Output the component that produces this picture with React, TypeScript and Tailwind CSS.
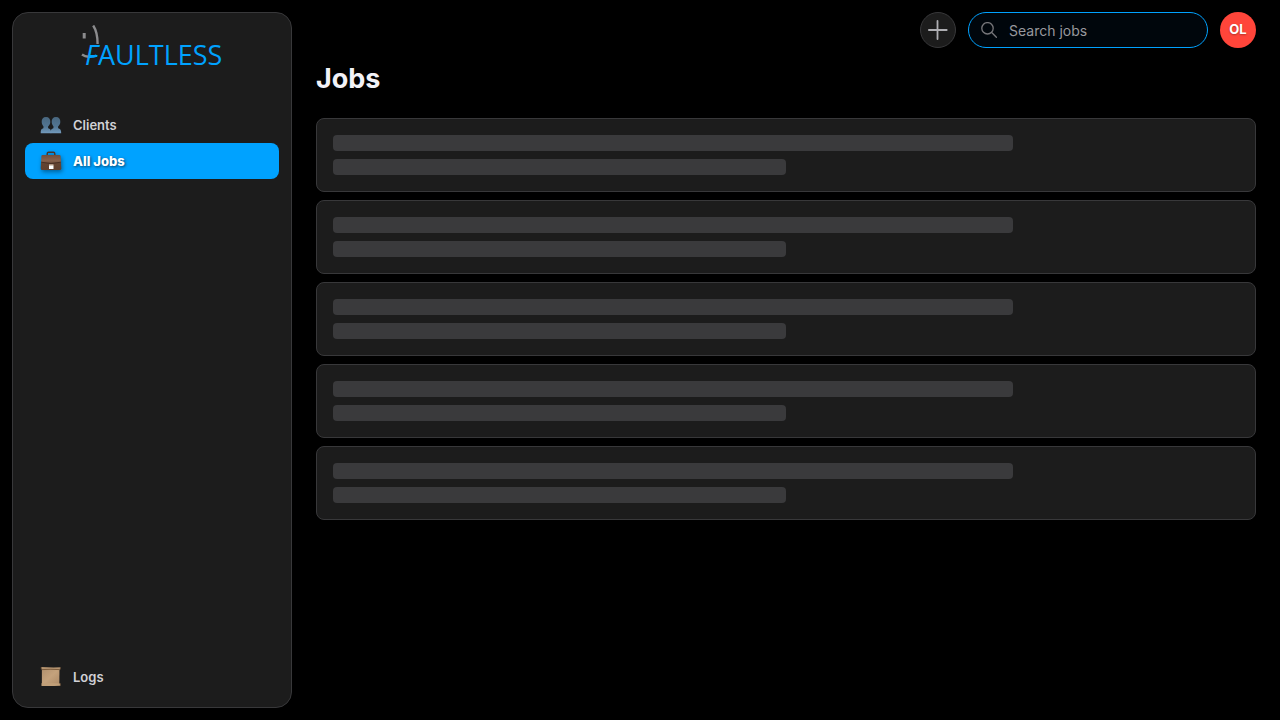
import React from "react";

function Logo() {
  return (
    <a href="#home" aria-label="Faultless" className="relative flex h-[42px] w-[142px] items-end text-[#00a2ff]">
      <svg aria-hidden="true" viewBox="0 0 24 40" className="absolute top-0 left-0 h-10 w-6" fill="none" stroke="#8b8b8d" strokeWidth="2.4">
        <path d="M3.200 8v5.500" strokeWidth="3" />
        <path d="M12.200.5C15.200 5 16.600 12 16.600 19" />
        <path d="M1 29.500c2 1.500 4.500 2.300 7 2.200" />
        <path d="M7 31.700c3.500.3 6 0 8.500-1" stroke="#00a2ff" />
      </svg>
      <span className="pl-1 font-['Open_Sans','Noto_Sans',sans-serif] text-[27px] leading-6 font-normal">
        <span className="italic">F</span>AULTLESS
      </span>
    </a>
  );
}

function ClientsIcon() {
  return (
    <svg aria-hidden="true" viewBox="0 0 22 20" className="h-5 w-[22px]">
      <defs>
        <linearGradient id="people" gradientUnits="userSpaceOnUse" x1="0" y1="2" x2="0" y2="18">
          <stop offset="0" stopColor="#49677f" />
          <stop offset=".6" stopColor="#527693" />
          <stop offset="1" stopColor="#7299bb" />
        </linearGradient>
      </defs>
      <g fill="url(#people)">
        <path d="M6 2C3 2 1.500 4 1.700 7c.1 2 .9 3.300 1.800 4.400.1 1.600-.2 2-1.300 2.400C1 14.400.7 15.800.7 18.300h10.500c0-2.500-.5-3.900-1.900-4.500-1.000-.4-1.400-.9-1.200-2.400C9.400 10.300 10.200 9 10.300 7 10.500 4 9 2 6 2Z" />
        <path d="M16 2c-3 0-4.500 2-4.300 5 .1 2 .9 3.300 1.800 4.400.1 1.600-.2 2-1.300 2.400-1.200.6-1.500 2-1.500 4.500h10.500c0-2.500-.5-3.900-1.900-4.500-1.000-.4-1.400-.9-1.200-2.400C19.400 10.300 20.200 9 20.300 7 20.500 4 19 2 16 2Z" />
      </g>
    </svg>
  );
}

function BriefcaseIcon() {
  return (
    <svg aria-hidden="true" viewBox="0 0 22 20" className="h-5 w-[22px] drop-shadow-[1px_2px_2px_rgba(0,0,0,0.4)]">
      <defs>
        <linearGradient id="leather" x1="0" y1="0" x2="0" y2="1">
          <stop offset="0" stopColor="#6f4d3c" />
          <stop offset=".4" stopColor="#88624d" />
          <stop offset=".55" stopColor="#644432" />
          <stop offset="1" stopColor="#60402f" />
        </linearGradient>
      </defs>
      <path d="M7.200 4.500V2.700q0-1.400 1.300-1.400h5q1.300 0 1.300 1.400v1.800" fill="none" stroke="#4b3326" strokeWidth="1.400" />
      <path d="M2.500 4h17q1 0 1.100 1l.7 12.500q0 1.500-1.600 1.500H2.300Q.7 19 .7 17.500L1.400 5q.1-1 1.100-1Z" fill="url(#leather)" />
      <path d="M1.200 11.200q9.800 2.800 19.600 0" fill="none" stroke="#412a20" strokeWidth=".8" />
      <path d="M9 13h4.500v2H9Z" fill="#ae9583" />
      <path d="M9 14.500h4.500V18H9Z" fill="#fff" />
    </svg>
  );
}

function ScrollIcon() {
  return (
    <svg aria-hidden="true" viewBox="0 0 22 20" className="h-5 w-[22px]">
      <defs>
        <linearGradient id="paper" x1="0" y1="0" x2="1" y2="1">
          <stop offset="0" stopColor="#b0906e" />
          <stop offset=".5" stopColor="#c4a27c" />
          <stop offset="1" stopColor="#ae8b67" />
        </linearGradient>
      </defs>
      <path d="M1.900 1.500h17.600l-.2 16H1.900Z" fill="url(#paper)" />
      <path d="M1.200 0q9.500.7 19.200.3v2q-9.500-.5-19.200 0Z" fill="#b59470" />
      <path d="M2 2.600q9-.6 17.500 0" fill="none" stroke="#765637" strokeWidth=".9" />
      <path d="M1.500 16.300q9-.6 18.900.2v2.200q-9.900.5-18.900.2Z" fill="#c19f78" />
      <path d="M1.200.2v2.100m19.200-2v2m0 14.200v2" stroke="#604731" strokeWidth=".8" />
    </svg>
  );
}

type NavItemProps = { label: string; icon: React.ReactNode; active?: boolean };

function NavItem({ label, icon, active = false }: NavItemProps) {
  return (
    <a
      href={"#" + label.toLowerCase().replace(" ", "-")}
      aria-current={active ? "page" : undefined}
      className={
        active
          ? "flex h-9 items-center gap-[11px] rounded-lg bg-[#00a2ff] px-[15px] font-extrabold text-white [text-shadow:1px_1px_3px_rgba(0,0,0,0.6)]"
          : "flex h-9 items-center gap-[11px] rounded-lg px-[15px] font-semibold text-[#d1d1d6]"
      }
    >
      {icon}
      <span>{label}</span>
    </a>
  );
}

function JobSkeleton() {
  return (
    <li className="flex flex-col gap-2 rounded-lg border border-[#38383a] bg-[#1c1c1c] p-4">
      <div className="h-4 w-3/4 rounded bg-[#3a3a3c]" />
      <div className="h-4 w-1/2 rounded bg-[#3a3a3c]" />
    </li>
  );
}

export default function App() {
  return (
    <div className="flex min-h-screen bg-black font-['Inter','Liberation_Sans',sans-serif] text-[#f2f2f7]">
      <aside className="my-3 ml-3 flex w-70 shrink-0 flex-col rounded-2xl border border-[#38383a] bg-[#1c1c1c] p-3 text-[13px] leading-5">
        <div className="flex justify-center">
          <Logo />
        </div>
        <nav aria-label="Main" className="mt-10 flex flex-1 flex-col">
          <NavItem label="Clients" icon={<ClientsIcon />} />
          <NavItem label="All Jobs" icon={<BriefcaseIcon />} active />
          <div className="mt-auto">
            <NavItem label="Logs" icon={<ScrollIcon />} />
          </div>
        </nav>
      </aside>

      <div className="flex min-w-0 flex-1 flex-col px-6 pt-3">
        <header className="flex items-center justify-end gap-3">
          <button type="button" aria-label="Add job" className="flex size-9 items-center justify-center rounded-full border border-[#38383a] bg-[#1c1c1c]">
            <svg aria-hidden="true" viewBox="0 0 20 20" className="size-5" stroke="#aeaeb2" strokeWidth="1.800" strokeLinecap="round">
              <path d="M9.500 1v18M.9 10h17.800" />
            </svg>
          </button>
          <label className="flex h-9 w-60 items-center gap-3 rounded-full border border-[#00a2ff] bg-[#00060c] px-3">
            <svg aria-hidden="true" viewBox="0 0 16 16" className="size-4 shrink-0" fill="none" stroke="#77777b" strokeWidth="1.300" strokeLinecap="round">
              <circle cx="6.500" cy="6.300" r="5.700" />
              <path d="m10.700 10.500 4.700 4.700" />
            </svg>
            <input type="text" aria-label="Search jobs" placeholder="Search jobs" className="w-full min-w-0 bg-transparent pt-px text-sm text-[#f2f2f7] outline-none placeholder:text-[#98989d]" />
          </label>
          <button type="button" aria-label="Account OL" className="flex size-9 items-center justify-center rounded-full bg-[#ff453a] text-[13px] font-bold text-white [text-shadow:0_1px_2px_rgba(0,0,0,0.3)]">
            OL
          </button>
        </header>

        <main className="pt-3">
          <h1 className="text-[27px] leading-[38px] font-bold">Jobs</h1>
          <ul aria-label="Loading jobs" aria-busy="true" className="mt-5 flex flex-col gap-2">
            <JobSkeleton />
            <JobSkeleton />
            <JobSkeleton />
            <JobSkeleton />
            <JobSkeleton />
          </ul>
        </main>
      </div>
    </div>
  );
}
